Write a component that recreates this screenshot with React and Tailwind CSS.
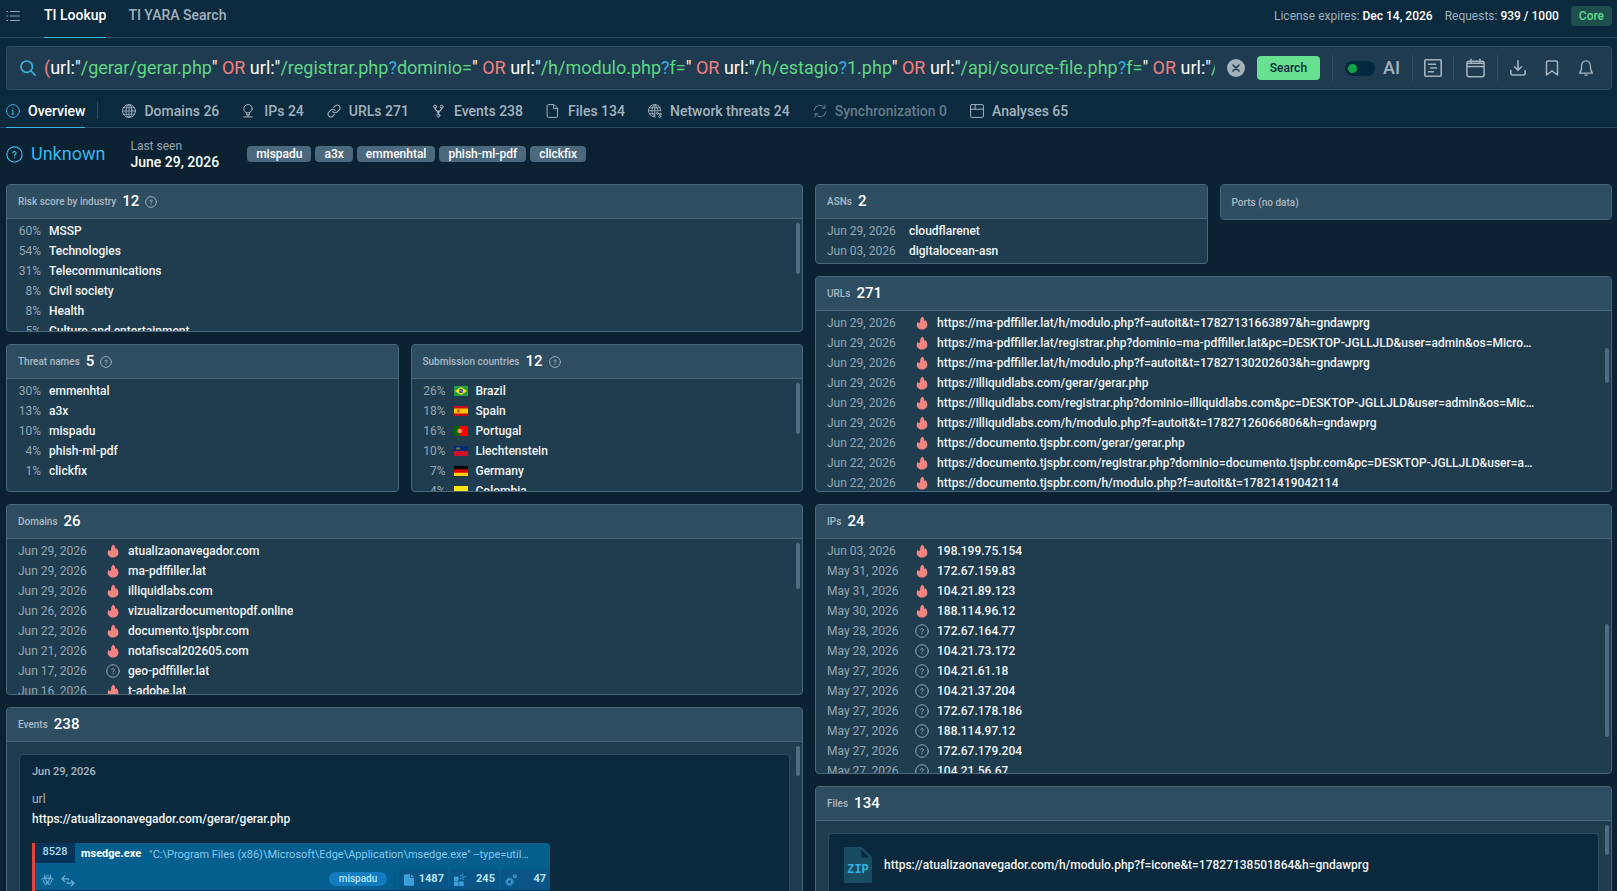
import { useState } from 'react'
import { FaBiohazard } from 'react-icons/fa'

const TABS = [
  { icon: 'globe', label: 'Domains', count: 26 },
  { icon: 'ip', label: 'IPs', count: 24 },
  { icon: 'link', label: 'URLs', count: 271 },
  { icon: 'events', label: 'Events', count: 238 },
  { icon: 'file', label: 'Files', count: 134 },
  { icon: 'network', label: 'Network threats', count: 24 },
  { icon: 'sync', label: 'Synchronization', count: 0 },
  { icon: 'analyses', label: 'Analyses', count: 65 },
]

const TAGS = ['mispadu', 'a3x', 'emmenhtal', 'phish-ml-pdf', 'clickfix']

const QUERY = '(url:"/gerar/gerar.php" OR url:"/registrar.php?dominio=" OR url:"/h/modulo.php?f=" OR url:"/h/estagio?1.php" OR url:"/api/source-file.php?f=" OR url:"/'

const INDUSTRIES = [
  ['60%', 'MSSP'],
  ['54%', 'Technologies'],
  ['31%', 'Telecommunications'],
  ['8%', 'Civil society'],
  ['8%', 'Health'],
  ['5%', 'Culture and entertainment'],
]

const THREATS = [
  ['30%', 'emmenhtal'],
  ['13%', 'a3x'],
  ['10%', 'mispadu'],
  ['4%', 'phish-ml-pdf'],
  ['1%', 'clickfix'],
]

const COUNTRIES = [
  ['26%', 'Brazil', 'br'],
  ['18%', 'Spain', 'es'],
  ['16%', 'Portugal', 'pt'],
  ['10%', 'Liechtenstein', 'li'],
  ['7%', 'Germany', 'de'],
  ['4%', 'Colombia', 'co'],
]

const DOMAINS = [
  ['Jun 29, 2026', true, 'atualizaonavegador.com'],
  ['Jun 29, 2026', true, 'ma-pdffiller.lat'],
  ['Jun 29, 2026', true, 'illiquidlabs.com'],
  ['Jun 26, 2026', true, 'vizualizardocumentopdf.online'],
  ['Jun 22, 2026', true, 'documento.tjspbr.com'],
  ['Jun 21, 2026', true, 'notafiscal202605.com'],
  ['Jun 17, 2026', false, 'geo-pdffiller.lat'],
  ['Jun 16, 2026', true, 't-adobe.lat'],
]

const URLS = [
  ['Jun 29, 2026', true, 'https://ma-pdffiller.lat/h/modulo.php?f=autoit&t=17827131663897&h=gndawprg'],
  ['Jun 29, 2026', true, 'https://ma-pdffiller.lat/registrar.php?dominio=ma-pdffiller.lat&pc=DESKTOP-JGLLJLD&user=admin&os=Micro…'],
  ['Jun 29, 2026', true, 'https://ma-pdffiller.lat/h/modulo.php?f=autoit&t=17827130202603&h=gndawprg'],
  ['Jun 29, 2026', true, 'https://illiquidlabs.com/gerar/gerar.php'],
  ['Jun 29, 2026', true, 'https://illiquidlabs.com/registrar.php?dominio=illiquidlabs.com&pc=DESKTOP-JGLLJLD&user=admin&os=Mic…'],
  ['Jun 29, 2026', true, 'https://illiquidlabs.com/h/modulo.php?f=autoit&t=17827126066806&h=gndawprg'],
  ['Jun 22, 2026', true, 'https://documento.tjspbr.com/gerar/gerar.php'],
  ['Jun 22, 2026', true, 'https://documento.tjspbr.com/registrar.php?dominio=documento.tjspbr.com&pc=DESKTOP-JGLLJLD&user=a…'],
  ['Jun 22, 2026', true, 'https://documento.tjspbr.com/h/modulo.php?f=autoit&t=17821419042114'],
]

const IPS = [
  ['Jun 03, 2026', true, '198.199.75.154'],
  ['May 31, 2026', true, '172.67.159.83'],
  ['May 31, 2026', true, '104.21.89.123'],
  ['May 30, 2026', true, '188.114.96.12'],
  ['May 28, 2026', false, '172.67.164.77'],
  ['May 28, 2026', false, '104.21.73.172'],
  ['May 27, 2026', false, '104.21.61.18'],
  ['May 27, 2026', false, '104.21.37.204'],
  ['May 27, 2026', false, '172.67.178.186'],
  ['May 27, 2026', false, '188.114.97.12'],
  ['May 27, 2026', false, '172.67.179.204'],
  ['May 27, 2026', false, '104.21.56.67'],
]

function Svg({ className = 'w-3.5 h-3.5', box = 14, width = 1, children }) {
  return (
    <svg className={`shrink-0 ${className}`} viewBox={`0 0 ${box} ${box}`} fill="none" stroke="currentColor" strokeWidth={width} strokeLinecap="round" strokeLinejoin="round" aria-hidden="true">
      {children}
    </svg>
  )
}

function TabIcon({ name }) {
  switch (name) {
    case 'globe':
      return (
        <Svg>
          <circle cx="7" cy="7" r="6.4" />
          <ellipse cx="7" cy="7" rx="3" ry="6.4" />
          <path d="M7 .6v12.8M.6 7h12.8M1.5 3.8h11M1.5 10.2h11" strokeWidth="0.8" />
        </Svg>
      )
    case 'ip':
      return (
        <Svg>
          <circle cx="6" cy="4.8" r="4.2" />
          <path d="M4.4 8.8L4.8 11h2.4l.4-2.2M6 11v1.8M1.8 12.9h8.4" />
        </Svg>
      )
    case 'link':
      return (
        <Svg box={24} width={1.8}>
          <path d="M10 13a5 5 0 0 0 7.5.5l3.3-3.3a4.8 4.8 0 0 0-6.8-6.8l-2.6 2.5" />
          <path d="M14 11a5 5 0 0 0-7.5-.5l-3.3 3.3a4.8 4.8 0 0 0 6.8 6.8l2.6-2.5" />
        </Svg>
      )
    case 'events':
      return (
        <Svg>
          <circle cx="3" cy="2.6" r="1.5" />
          <circle cx="9.8" cy="2.6" r="1.5" />
          <circle cx="6.4" cy="11.6" r="1.5" />
          <path d="M3 4.1c0 2.6 3.4 2.2 3.4 5.9M9.8 4.1c0 2.6-3.4 2.2-3.4 5.9M6.4 7v3" strokeWidth="1.3" />
        </Svg>
      )
    case 'file':
      return (
        <Svg>
          <path d="M7.6.6H2.4c-.8 0-1.3.5-1.3 1.3v10.2c0 .8.5 1.3 1.3 1.3h7.9c.8 0 1.3-.5 1.3-1.3V4.6zM7.6.6v4h4" />
        </Svg>
      )
    case 'network':
      return (
        <Svg>
          <path d="M12.9 6.6A6.2 6.2 0 1 0 7 12.9M6.8.6C2.8 4 2.8 9.6 6.8 12.9M6.8.6C9 2.600 10 5 9.800 7M6.800.600v12M.7 6.700h12M1.500 3.800h10.600M1.500 9.800h5.500" strokeWidth="0.900" />
          <circle cx="9.400" cy="9.400" r="1" />
          <circle cx="12.300" cy="10" r=".8" />
          <circle cx="11.800" cy="12.500" r="1" />
        </Svg>
      )
    case 'sync':
      return (
        <Svg>
          <path d="M1.200 6.200A5.700 5.700 0 0 1 11.800 4M12 1v3.200H9M12.800 7.800A5.700 5.700 0 0 1 2.200 10M2 13V9.800h3" />
        </Svg>
      )
    default:
      return (
        <Svg>
          <rect x=".6" y=".6" width="12.800" height="12.800" rx=".8" />
          <path d="M.6 5.200h12.800M5.200.6v4.600" />
        </Svg>
      )
  }
}

function QuestionIcon({ className }) {
  return (
    <Svg className={className} box={14}>
      <circle cx="7" cy="7" r="6.300" />
      <path d="M5.700 5.700a1.300 1.300 0 1 1 2 1.200c-.5.3-.7.5-.7 1M7 9.600v.1" />
    </Svg>
  )
}

function Flame() {
  return (
    <svg className="w-3 h-3.5 shrink-0" viewBox="0 0 12 14" fill="#f28482" aria-hidden="true">
      <path d="M6.200.600c1.300.900 2.200 2 2 3.500-.1.500 0 .9.300 1 .5.1.800-.3.800-1 1.200.9 2.100 2.600 2.100 4.600 0 2.900-2.400 4.800-5.400 4.800S.700 11.500.700 8.900c0-1.400.4-2.400 1-3.300.2.900.700 1.400 1.400 1.300C3.900 6.800 4.100 5.900 4.100 4.800 4.100 3.100 5 1.700 6.200.600z" />
    </svg>
  )
}

function Flag({ code }) {
  return (
    <svg className="w-3.5 h-2.5 shrink-0" viewBox="0 0 14 10" aria-hidden="true">
      {code === 'br' && (
        <>
          <path fill="#229e45" d="M0 0h14v10H0z" />
          <path fill="#f8e509" d="M7 1l6 4-6 4-6-4z" />
          <circle cx="7" cy="5" r="2.200" fill="#2b49a3" />
          <path stroke="#fff" strokeWidth=".5" fill="none" d="M5 4.600c1.500-.2 3 .2 4 1.200" />
        </>
      )}
      {code === 'es' && (
        <>
          <path fill="#c60b1e" d="M0 0h14v10H0z" />
          <path fill="#ffc400" d="M0 2.500h14v5H0z" />
          <path fill="#c0603a" d="M3.200 3.500h2.600v3H3.200z" />
        </>
      )}
      {code === 'pt' && (
        <>
          <path fill="#f00" d="M0 0h14v10H0z" />
          <path fill="#060" d="M0 0h5.600v10H0z" />
          <circle cx="5.600" cy="5" r="2.200" fill="#f8e045" />
          <path fill="#e33" d="M4.400 3.600h2.400v2.800H4.400z" />
          <path fill="#fff" d="M5 4.300h1.200v1.500H5z" />
        </>
      )}
      {code === 'li' && (
        <>
          <path fill="#ce1126" d="M0 0h14v10H0z" />
          <path fill="#002b7f" d="M0 0h14v5H0z" />
          <path fill="#7d7a2c" d="M2.200 1.500h4v2h-4z" />
        </>
      )}
      {code === 'de' && (
        <>
          <path fill="#ffce00" d="M0 0h14v10H0z" />
          <path fill="#d00" d="M0 0h14v6.700H0z" />
          <path fill="#000" d="M0 0h14v3.300H0z" />
        </>
      )}
      {code === 'co' && (
        <>
          <path fill="#ffe800" d="M0 0h14v5H0z" />
          <path fill="#00148e" d="M0 5h14v2.500H0z" />
          <path fill="#da0010" d="M0 7.500h14V10H0z" />
        </>
      )}
    </svg>
  )
}

// Colours the search expression: operators red, values green, wildcards blue
function Highlighted({ text }) {
  const parts = text.match(/\(| OR |url:"|"|\?|[^"?]+/g) || []
  return parts.map((part, i) => {
    let color = 'text-[#5fd585]'
    if (part === '(' || part === ' OR ') color = 'text-[#f07f80]'
    else if (part === '"' || part === 'url:"') color = 'text-white'
    else if (part === '?') color = 'text-[#2fb1e8]'
    return <span key={i} className={color}>{part}</span>
  })
}

function Panel({ title, count, help, thumb, bodyClass = '', children }) {
  return (
    <section className="bg-[#203d50] border border-[#4a677a] rounded overflow-hidden">
      <header className={`h-[34px] px-[11px] flex items-center bg-[#2f4d61] ${children ? 'border-b border-[#4a677a]' : ''}`}>
        <h2 className="text-[10px] font-medium text-[#a9b9c4]">{title}</h2>
        {count && <span className="ml-1.5 text-[15px] font-medium text-white">{count}</span>}
        {help && (
          <button className="ml-1.5 text-[#a9b9c4]" aria-label={`About ${title}`}>
            <QuestionIcon className="w-3 h-3 block" />
          </button>
        )}
      </header>
      {children && (
        <div className={`relative overflow-hidden ${bodyClass}`}>
          {children}
          {thumb && <div className={`absolute right-0.5 w-1 rounded-sm bg-[#4f6d82] ${thumb}`} />}
        </div>
      )}
    </section>
  )
}

function ScoreList({ rows }) {
  return (
    <ul className="pt-0.5 px-[11px] text-xs">
      {rows.map(([score, name, flag]) => (
        <li key={name} className="h-5 flex items-center gap-2">
          <span className="w-[23px] text-right text-[#95a7b3]">{score}</span>
          {flag && <Flag code={flag} />}
          <span className="font-medium text-[#f2f5f6]">{name}</span>
        </li>
      ))}
    </ul>
  )
}

function IndicatorList({ rows }) {
  return (
    <ul className="pt-0.5 pl-[11px] pr-8 text-xs">
      {rows.map(([date, malicious, value]) => (
        <li key={value} className="h-5 flex items-center">
          <span className="w-[88px] shrink-0 text-[#95a7b3]">{date}</span>
          <span className="w-3.5 mr-2 shrink-0 flex justify-center text-[#95a7b3]">
            {malicious ? <Flame /> : <QuestionIcon className="w-3.5 h-3.5" />}
          </span>
          <a href="#" className="truncate font-medium text-[#f2f5f6]">{value}</a>
        </li>
      ))}
    </ul>
  )
}

function TopBar() {
  return (
    <header className="h-[38px] flex items-stretch justify-between pl-1.5 pr-[5px] border-b border-[#2b4a5e]">
      <div className="flex items-stretch">
        <button className="mr-6 pb-1.5 text-[#8fa3b0]" aria-label="Menu">
          <Svg>
            <path d="M4.500 2.500h9M4.500 7h9M4.500 11.500h9M1 2.500h.8M1 7h.8M1 11.500h.8" />
          </Svg>
        </button>
        <nav className="flex gap-[22px] text-sm font-medium">
          <a href="#" className="-mb-px flex items-center pb-[7px] border-b border-[#38b6e8] text-white">TI Lookup</a>
          <a href="#" className="flex items-center pb-[7px] text-[#a3b3be]">TI YARA Search</a>
        </nav>
      </div>
      <div className="flex items-center gap-3 pb-[5px] text-xs">
        <p className="text-[#9db0bd]">License expires: <span className="font-medium text-white">Dec 14, 2026</span></p>
        <p className="text-[#9db0bd]">Requests: <span className="font-medium text-white">939 / 1000</span></p>
        <span className="px-2 leading-5 rounded bg-[#1f4e4f] font-medium text-[#5fdc8a]">Core</span>
      </div>
    </header>
  )
}

function SearchBar() {
  const [query, setQuery] = useState(QUERY)
  const [ai, setAi] = useState(false)
  return (
    <form className="ml-1.5 mr-[5px] mt-2 h-11 pl-[13px] pr-[17px] flex items-center rounded bg-[#1f3b4f] border border-[#2f4e61]" onSubmit={e => e.preventDefault()}>
      <Svg className="w-4 h-4 mr-2 text-[#38b6e8]" box={16} width={1.600}>
        <circle cx="6.700" cy="6.700" r="5.700" />
        <path d="M11 11l4.200 4.200" />
      </Svg>
      <div className="relative flex-1 min-w-0 h-7 leading-7 text-lg overflow-hidden whitespace-pre">
        <div aria-hidden="true"><Highlighted text={query} /></div>
        <input
          aria-label="Search query"
          spellCheck={false}
          className="absolute inset-0 w-full h-7 p-0 bg-transparent text-transparent caret-white outline-none"
          value={query}
          onChange={e => setQuery(e.target.value)}
        />
      </div>
      <button type="button" className="ml-3 w-[18px] h-[18px] flex items-center justify-center rounded-full bg-[#a3b1bb] text-[#1f3b4f]" aria-label="Clear" onClick={() => setQuery('')}>
        <Svg className="w-2 h-2" box={8} width={1.600}><path d="M1 1l6 6M7 1L1 7" /></Svg>
      </button>
      <button className="ml-3 w-[63px] h-6 rounded bg-[#67e08f] text-xs font-medium text-[#0c2a3e]">Search</button>
      <label className="ml-3 h-[26px] px-3 flex items-center gap-2 border-x border-[#2f4e61] text-lg font-medium text-[#a3b3be]">
        <span className="relative w-[30px] h-[15px]">
          <input type="checkbox" className="block w-[30px] h-[15px] appearance-none rounded-full bg-[#04293f]" checked={ai} onChange={() => setAi(!ai)} />
          <span className={`absolute top-[3px] w-[9px] h-[9px] rounded-full bg-[#10a34a] pointer-events-none ${ai ? 'right-[3px]' : 'left-[3px]'}`} />
        </span>
        AI
      </label>
      <div className="flex items-center text-[#a3b3be]">
        <button type="button" className="h-[26px] px-[11px] border-r border-[#2f4e61]" aria-label="Query builder">
          <Svg className="w-[18px] h-[18px]" box={18} width={1.600}>
            <rect x=".8" y=".8" width="16.400" height="16.400" rx="1" />
            <path d="M4.500 5.300h7M6.500 9h6M4.500 12.700h5" />
          </Svg>
        </button>
        <button type="button" className="h-[26px] px-3 border-r border-[#2f4e61]" aria-label="Date range">
          <Svg className="w-[19px] h-5" box={20} width={1.600}>
            <rect x="1" y="3" width="18" height="16.200" rx="2" />
            <path d="M1 8.500h18M5.300.8v3.500M14.700.8v3.500M1.500 5h17" />
          </Svg>
        </button>
        <button type="button" className="pl-3" aria-label="Download">
          <Svg className="w-4 h-4" box={16} width={1.600}>
            <path d="M8 .8v9.200M4.500 6.800L8 10.300l3.500-3.500M.9 10.500v3c0 .9.500 1.500 1.400 1.500h11.400c.9 0 1.400-.6 1.400-1.500v-3" />
          </Svg>
        </button>
        <button type="button" className="pl-[18px]" aria-label="Bookmark">
          <Svg className="w-4 h-4" box={16} width={1.500}>
            <path d="M2.500 15V2.200c0-.8.500-1.300 1.300-1.300h8.400c.8 0 1.300.5 1.300 1.300V15L8 10.800z" />
          </Svg>
        </button>
        <button type="button" className="pl-[18px]" aria-label="Notifications">
          <Svg className="w-4 h-4" box={16} width={1.300}>
            <path d="M1.500 13.200h13c-1.600-1.400-2-2.800-2-6.400C12.500 3 10.700.9 8 .9S3.500 3 3.500 6.800c0 3.600-.4 5-2 6.400zM6.800 15.200h2.400" />
          </Svg>
        </button>
      </div>
    </form>
  )
}

function Tabs() {
  return (
    <nav className="h-[38px] px-1.5 flex items-stretch border-b border-[#2b4a5e] text-sm font-medium">
      <a href="#" className="-mb-px pt-1 flex items-center gap-2 border-b border-[#38b6e8] text-white">
        <Svg className="w-3.5 h-3.5 text-[#38b6e8]">
          <circle cx="7" cy="7" r="6.400" />
          <path d="M6.200 6.300H7V10M6 10h2M7 4v.2" />
        </Svg>
        Overview
      </a>
      <div className="mt-1 self-center w-px h-[17px] ml-3 bg-[#2f4e61]" />
      <div className="ml-6 pt-1 flex items-center gap-[23px]">
        {TABS.map(tab => (
          <a key={tab.label} href="#" className={`flex items-center gap-2 ${tab.count ? 'text-[#a3b3be]' : 'text-[#647b8b]'}`}>
            <TabIcon name={tab.icon} />
            {tab.label} {tab.count}
          </a>
        ))}
      </div>
    </nav>
  )
}

function Summary() {
  return (
    <div className="h-[52px] mb-1 px-1.5 flex items-center">
      <div className="flex items-center gap-2 text-lg text-[#38b6e8]">
        <QuestionIcon className="w-[17px] h-[17px]" />
        Unknown
      </div>
      <div className="ml-[25px]">
        <p className="text-xs leading-4 text-[#95a7b3]">Last seen</p>
        <p className="text-sm leading-4 font-medium text-white">June 29, 2026</p>
      </div>
      <div className="ml-7 flex gap-1">
        {TAGS.map(tag => (
          <a key={tag} href="#" className="px-[9px] rounded bg-[#4c687c] text-xs font-medium text-white">{tag}</a>
        ))}
      </div>
    </div>
  )
}

function ProcessStat({ value, children }) {
  return (
    <span className="w-[49px] h-[21px] px-1 flex items-center justify-between bg-[#0a5587] text-[11px] font-bold text-[#b9e2f7]">
      <svg className="w-3 h-3 shrink-0" viewBox="0 0 12 12" fill="#3d9fd8" stroke="none" aria-hidden="true">{children}</svg>
      {value}
    </span>
  )
}

function EventCard() {
  return (
    <article className="m-3 h-60 px-3 pt-[7px] bg-[#0b293c] border border-[#2f4d61] rounded text-xs">
      <p className="leading-5 text-[11px] font-medium text-[#a9b9c4]">Jun 29, 2026</p>
      <p className="mt-[7px] leading-5 text-[#a3b3be]">url</p>
      <a href="#" className="block leading-5 font-medium text-[#f2f5f6]">https://atualizaonavegador.com/gerar/gerar.php</a>
      <div className="mt-3.5 max-w-[518px] border-l-3 border-[#e0443e] bg-[#035f8e] rounded-r-sm">
        <div className="flex h-6 items-start text-[11px]">
          <span className="w-10 h-5 leading-[18px] shrink-0 text-center font-medium bg-[#043459] text-[#a6dbf7]">8528</span>
          <span className="ml-1.5 leading-[22px] font-bold text-white">msedge.exe</span>
          <span className="ml-2 mr-1 leading-6 truncate text-[#85c8ee]">"C:\Program Files (x86)\Microsoft\Edge\Application\msedge.exe" --type=util…</span>
        </div>
        <div className="flex items-start pl-1.5">
          <FaBiohazard className="w-[13px] h-[13px] mt-1.5 text-[#5aa3cf]" />
          <svg className="w-3.5 h-3 mt-2 ml-[7px] text-[#69aed6]" viewBox="0 0 14 12" fill="none" stroke="currentColor" strokeWidth="1.300" aria-hidden="true">
            <path d="M4 .8L1 3.800l3 3M1 3.800h6.500v1.500M10 5.200l3 3-3 3M13 8.200H6.500V6.800" />
          </svg>
          <span className="ml-auto mt-[5px] w-[58px] h-3.5 leading-[13px] rounded-full bg-[#127cc1] text-center text-[10px] font-medium text-[#b9e2f7]">mispadu</span>
          <div className="mt-0.5 ml-3 flex gap-0.5">
            <ProcessStat value="1487">
              <path d="M1 1.500C1 .7 1.500.2 2.200.2H7v3.600h4v6.700c0 .8-.5 1.300-1.200 1.300H2.200c-.7 0-1.200-.5-1.200-1.300zM8 .2l3 2.800H8z" />
            </ProcessStat>
            <ProcessStat value="245">
              <path d="M0 2.500h4.500V7H0zM0 7.500h4.500V12H0zM5.200 7.500h4.500V12H5.200zM6 1h1.300v1.300H6zM6 4h1.300v1.300H6zM8.500 4.500h1.300v1.300H8.500zM8 0h1.300v1.300H8zM10.500 2h1.300v1.300h-1.300zM8 2.300h1.600v1.400H8z" />
            </ProcessStat>
            <ProcessStat value="47">
              <g fill="none" stroke="#3d9fd8">
                <circle cx="4.500" cy="7.800" r="2.500" strokeWidth="1.600" />
                <circle cx="4.500" cy="7.800" r="3.900" strokeWidth="1" strokeDasharray="1.700 1.360" />
                <circle cx="9.800" cy="2.300" r="1.400" strokeWidth="1.200" />
              </g>
            </ProcessStat>
          </div>
        </div>
        <div className="h-8 bg-[#043459]" />
      </div>
    </article>
  )
}

function FileCard() {
  return (
    <article className="m-3 h-16 px-[15px] flex items-center gap-3 bg-[#0b293c] border border-[#2f4d61] rounded">
      <svg className="w-7 h-9 shrink-0" viewBox="0 0 28 36" aria-hidden="true">
        <path fill="#184c63" d="M1.500 0H18l10 10v24.500c0 .8-.7 1.500-1.500 1.500h-25C.7 36 0 35.300 0 34.500v-33C0 .7.7 0 1.500 0z" />
        <path fill="#0b293c" d="M17.500 3l7.500 7.500h-7.500z" />
        <text x="14" y="26" textAnchor="middle" fontSize="12" fontWeight="700" fontFamily="'Liberation Mono', monospace" fill="#2fb1e0">ZIP</text>
      </svg>
      <a href="#" className="text-xs font-medium text-[#f2f5f6]">https://atualizaonavegador.com/h/modulo.php?f=icone&amp;t=17827138501864&amp;h=gndawprg</a>
    </article>
  )
}

export default function App() {
  return (
    <div className="h-screen overflow-hidden flex flex-col bg-[#0a2232] font-['Roboto',sans-serif]">
      <div className="bg-[#0c2a3e]">
        <TopBar />
        <SearchBar />
        <Tabs />
      </div>
      <main>
        <Summary />
        <div className="pl-1.5 pr-[5px] grid grid-cols-2 gap-3 items-start">
          <div className="flex flex-col gap-3">
            <Panel title="Risk score by industry" count="12" help thumb="top-1 h-[51px]" bodyClass="h-28">
              <ScoreList rows={INDUSTRIES} />
            </Panel>
            <div className="grid grid-cols-2 gap-3">
              <Panel title="Threat names" count="5" help bodyClass="h-28">
                <ScoreList rows={THREATS} />
              </Panel>
              <Panel title="Submission countries" count="12" help thumb="top-1 h-[51px]" bodyClass="h-28">
                <ScoreList rows={COUNTRIES} />
              </Panel>
            </div>
            <Panel title="Domains" count="26" thumb="top-1 h-[46px]" bodyClass="h-[155px]">
              <IndicatorList rows={DOMAINS} />
            </Panel>
            <Panel title="Events" count="238" thumb="top-1 h-[30px]">
              <EventCard />
            </Panel>
          </div>
          <div className="flex flex-col gap-3">
            <div className="grid grid-cols-2 gap-3 items-start">
              <Panel title="ASNs" count="2">
                <ul className="py-0.5 px-[11px] text-xs">
                  <li className="h-5 flex items-center">
                    <span className="w-[82px] text-[#95a7b3]">Jun 29, 2026</span>
                    <a href="#" className="font-medium text-[#f2f5f6]">cloudflarenet</a>
                  </li>
                  <li className="h-5 flex items-center">
                    <span className="w-[82px] text-[#95a7b3]">Jun 03, 2026</span>
                    <a href="#" className="font-medium text-[#f2f5f6]">digitalocean-asn</a>
                  </li>
                </ul>
              </Panel>
              <Panel title="Ports (no data)" />
            </div>
            <Panel title="URLs" count="271" thumb="top-[37px] h-[35px]" bodyClass="h-[180px]">
              <IndicatorList rows={URLS} />
            </Panel>
            <Panel title="IPs" count="24" thumb="top-[85px] h-[113px]" bodyClass="h-[234px]">
              <IndicatorList rows={IPS} />
            </Panel>
            <Panel title="Files" count="134" thumb="top-1 h-[30px]">
              <FileCard />
              <FileCard />
            </Panel>
          </div>
        </div>
      </main>
    </div>
  )
}
